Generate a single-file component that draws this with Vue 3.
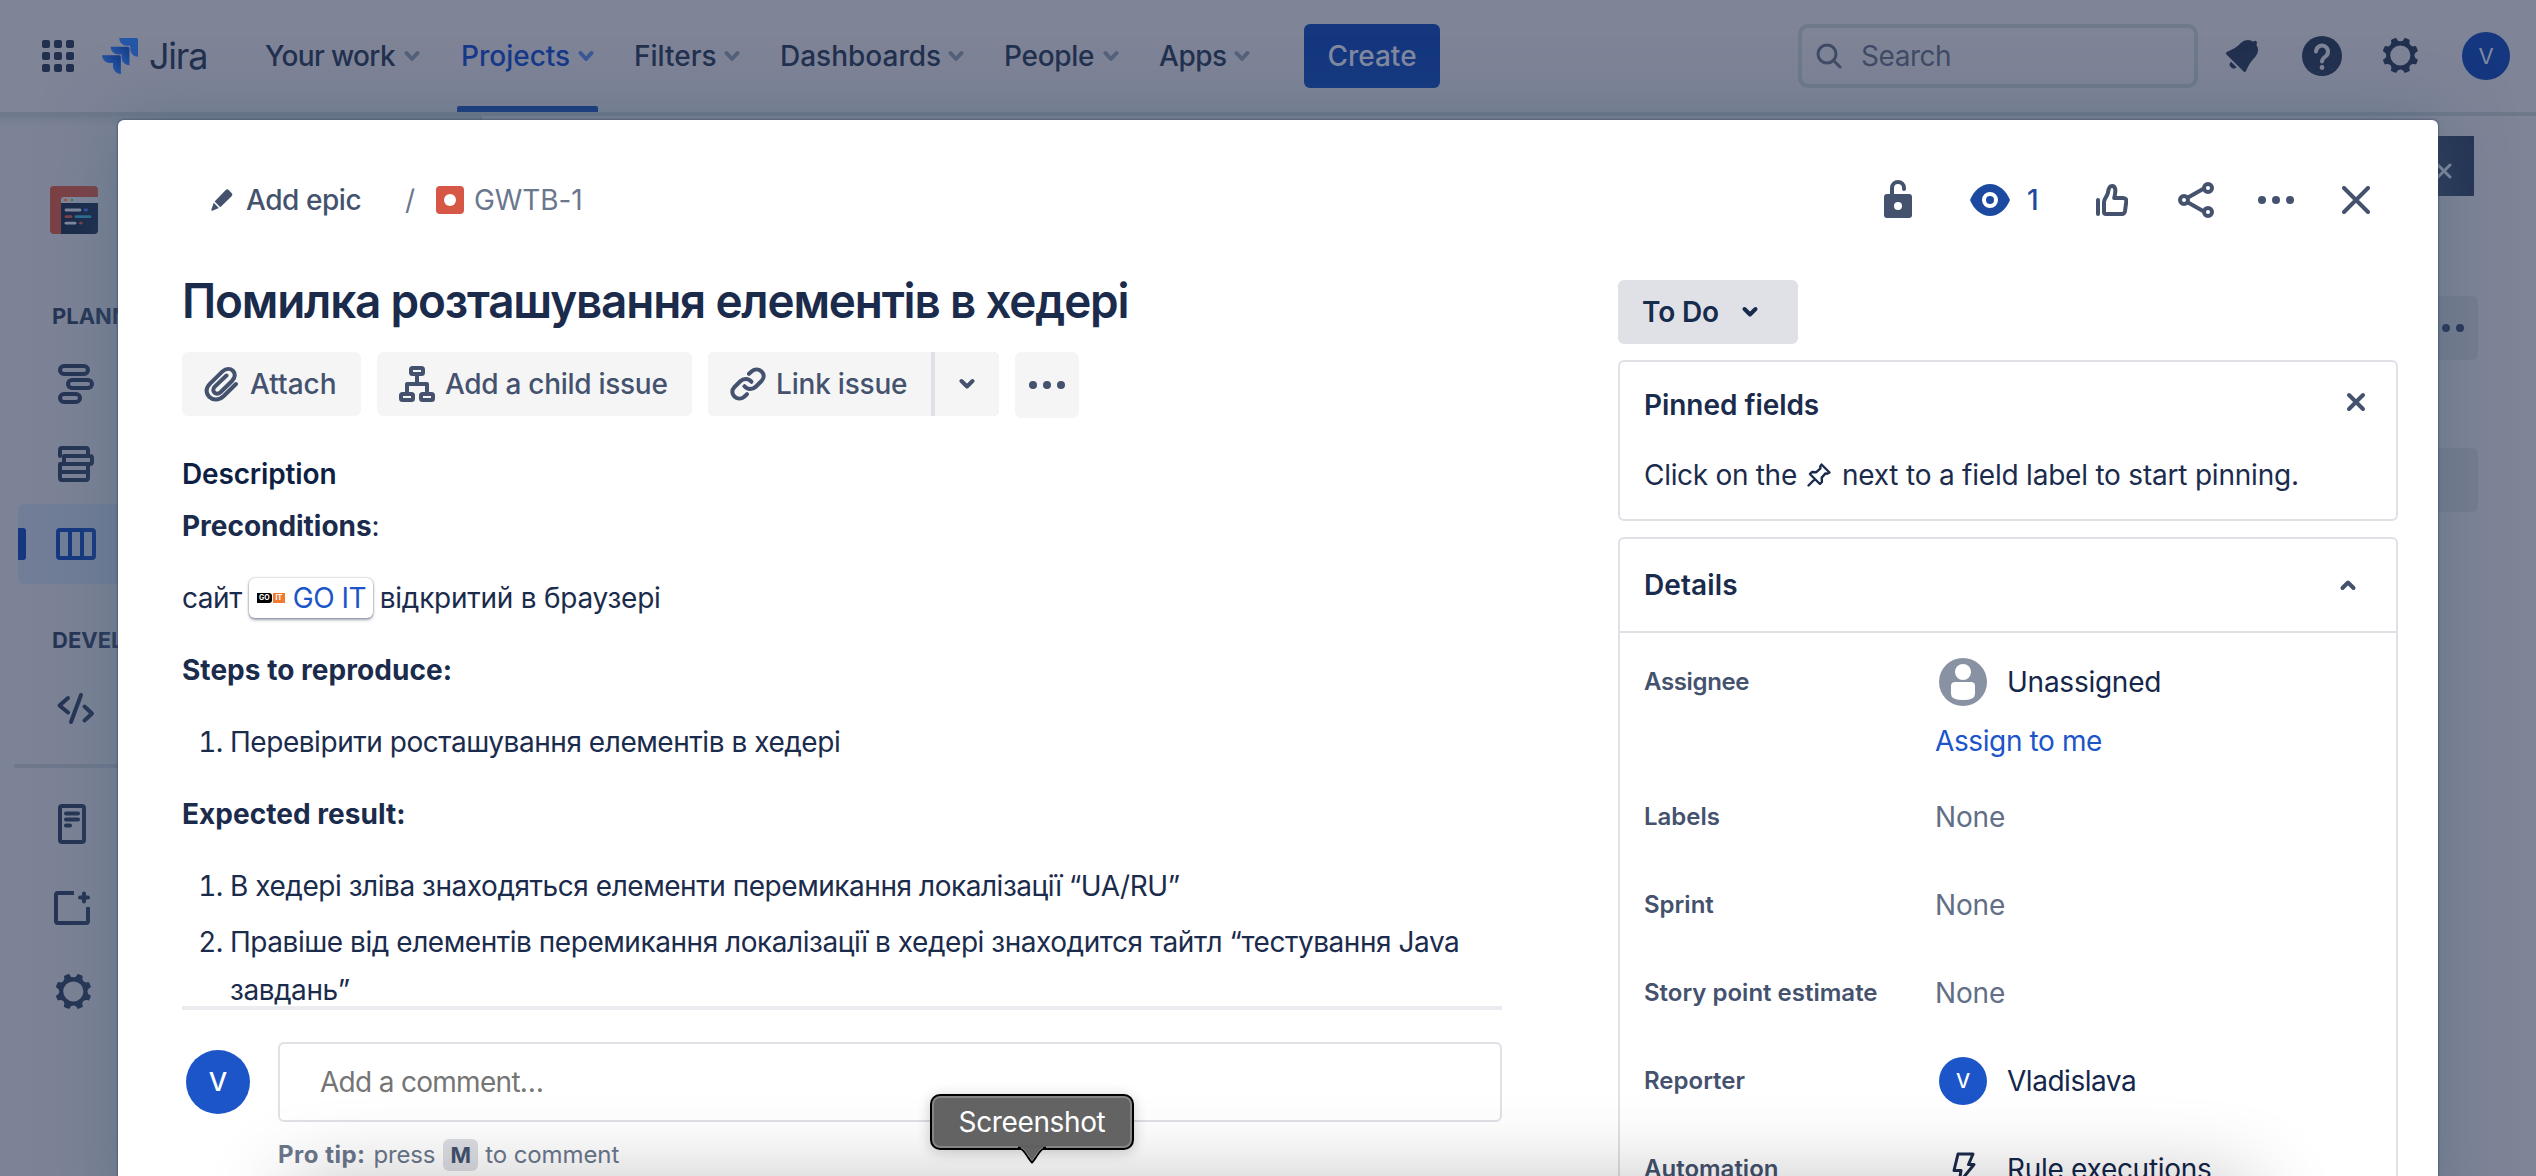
<script setup>
const navItems = [
  { label: 'Your work', cls: 'w-work' },
  { label: 'Projects', cls: 'w-projects', active: true },
  { label: 'Filters', cls: 'w-filters' },
  { label: 'Dashboards', cls: 'w-dash' },
  { label: 'People', cls: 'w-people' },
  { label: 'Apps', cls: 'w-apps' },
]
const emptyFields = ['Labels', 'Sprint', 'Story point estimate']
const gear =
  'M11.701 16.7a5.002 5.002 0 110-10.003 5.002 5.002 0 010 10.004m8.368-3.117a1.995 1.995 0 01-1.346-1.885c0-.876.563-1.613 1.345-1.885a.48.48 0 00.315-.574 8.947 8.947 0 00-.836-1.993.477.477 0 00-.598-.195 2.04 2.04 0 01-1.29.08 1.988 1.988 0 01-1.404-1.395 2.04 2.04 0 01.076-1.297.478.478 0 00-.196-.597 8.98 8.98 0 00-1.975-.826.479.479 0 00-.574.314 1.995 1.995 0 01-1.885 1.346 1.994 1.994 0 01-1.884-1.345.482.482 0 00-.575-.315c-.708.2-1.379.485-2.004.842a.477.477 0 00-.198.582A2.002 2.002 0 014.445 7.06a.478.478 0 00-.595.196 8.946 8.946 0 00-.833 1.994.48.48 0 00.308.572 1.995 1.995 0 011.323 1.877c0 .867-.552 1.599-1.324 1.877a.479.479 0 00-.308.57 8.99 8.99 0 00.723 1.79.477.477 0 00.624.194c.595-.273 1.343-.264 2.104.238.117.077.225.185.302.3.527.8.512 1.58.198 2.188a.473.473 0 00.168.628 8.946 8.946 0 002.11.897.474.474 0 00.57-.313 1.995 1.995 0 011.886-1.353c.878 0 1.618.567 1.887 1.353a.475.475 0 00.57.313 8.964 8.964 0 002.084-.883.473.473 0 00.167-.631c-.318-.608-.337-1.393.191-2.195.077-.116.185-.225.302-.302.772-.511 1.527-.513 2.125-.23a.477.477 0 00.628-.19 8.925 8.925 0 00.728-1.793.478.478 0 00-.314-.573'
</script>

<template>
  <div class="screen">
    <header class="nav">
      <svg class="apps" width="32" height="32" viewBox="0 0 32 32">
        <template v-for="r in 3" :key="r">
          <rect v-for="c in 3" :key="c" :x="(c - 1) * 12" :y="(r - 1) * 12" width="8" height="8" rx="2" />
        </template>
      </svg>
      <svg class="mark" width="36" height="36" viewBox="0 0 24 24">
        <defs>
          <linearGradient id="jg" x1="1" y1="0" x2="0.35" y2="0.6">
            <stop offset="0.2" stop-color="#173f8c" />
            <stop offset="1" stop-color="#2656a6" />
          </linearGradient>
        </defs>
        <path fill="#2656a6" d="M23.013 0H11.455a5.215 5.215 0 0 0 5.215 5.215h2.129v2.057A5.215 5.215 0 0 0 24 12.483V1.005A1.001 1.001 0 0 0 23.013 0Z" />
        <path fill="url(#jg)" d="M17.294 5.757H5.736a5.215 5.215 0 0 0 5.215 5.214h2.129v2.058a5.218 5.218 0 0 0 5.215 5.214V6.758a1.001 1.001 0 0 0-1.001-1.001z" />
        <path fill="url(#jg)" d="M11.571 11.513H0a5.218 5.218 0 0 0 5.232 5.215h2.13v2.057A5.215 5.215 0 0 0 12.575 24V12.518a1.005 1.005 0 0 0-1.005-1.005z" />
      </svg>
      <span class="brand">Jira</span>
      <nav class="menu">
        <a v-for="n in navItems" :key="n.label" class="item" :class="[n.cls, { active: n.active }]">
          <span>{{ n.label }}</span>
          <svg width="16" height="12" viewBox="0 0 16 12"><path d="M2.5 3L8 9l5.500-6" /></svg>
        </a>
      </nav>
      <button class="create">Create</button>
      <div class="search">
        <svg width="26" height="26" viewBox="0 0 26 26"><circle cx="11" cy="11" r="9" /><path d="M17.500 17.500L24 24" /></svg>
        <span>Search</span>
      </div>
      <svg class="bell" width="48" height="48" viewBox="0 0 24 24">
        <path d="M6.485 17.669a2 2 0 002.829 0l-2.829-2.83a2 2 0 000 2.83zm4.897-12.191l-.725.725c-.782.782-2.21 1.813-3.206 2.311l-3.017 1.509c-.495.248-.584.774-.187 1.171l8.556 8.556c.398.396.922.313 1.171-.188l1.51-3.016c.494-.988 1.526-2.42 2.311-3.206l.725-.726a5.048 5.048 0 00.64-6.356 1.01 1.01 0 10-1.354-1.494c-.023.025-.046.049-.066.075a5.043 5.043 0 00-2.788-.84 5.036 5.036 0 00-3.570 1.478z" />
      </svg>
      <svg class="help" width="40" height="40" viewBox="0 0 40 40">
        <circle cx="20" cy="20" r="20" fill="#22304f" />
        <path d="M14 15.500a6 6 0 1 1 9.500 5c-2.300 1.600-3.500 2.500-3.500 5" fill="none" stroke="#7f8497" stroke-width="4" stroke-linecap="round" />
        <circle cx="20" cy="31.500" r="2.400" fill="#7f8497" />
      </svg>
      <svg class="cog" width="48" height="48" viewBox="0 0 24 24"><path fill-rule="evenodd" :d="gear" /></svg>
      <span class="me">V</span>
    </header>

    <aside class="side">
      <svg class="project" width="48" height="48" viewBox="0 0 48 48">
        <defs><clipPath id="pc"><rect width="48" height="48" rx="4" /></clipPath></defs>
        <g clip-path="url(#pc)">
          <rect width="48" height="48" fill="#7c4145" />
          <path d="M11 17v-3a3 3 0 0 1 3-3h34v6z" fill="#7f8799" />
          <rect x="11" y="17" width="37" height="31" fill="#1a2a4a" />
          <circle cx="15.500" cy="14" r="1.200" fill="#a33c3a" /><circle cx="19" cy="14" r="1.200" fill="#a8842f" /><circle cx="22" cy="14" r="1.200" fill="#2d75a0" />
          <g stroke-width="2.800" stroke-linecap="round">
            <path d="M16 24h14" stroke="#8188a0" /><path d="M35 24h1.500" stroke="#2c539c" />
            <path d="M16 30.700h5" stroke="#7c4145" /><path d="M26 30.700h14" stroke="#2a6e8f" />
            <path d="M16 37.200h9" stroke="#8188a0" /><path d="M30.500 37.200h.6" stroke="#7c4145" />
          </g>
        </g>
      </svg>
      <div class="group g1">PLANNING</div>
      <div class="row r1">
        <svg width="40" height="40" viewBox="0 0 40 40"><rect x="4" y="2" width="28" height="8" rx="4" /><rect x="12" y="16" width="24" height="8" rx="4" /><rect x="4" y="30" width="20" height="8" rx="4" /></svg>
      </div>
      <div class="row r2">
        <svg width="40" height="40" viewBox="0 0 40 40"><path d="M4 12V6q0-2 2-2h24q2 0 2 2v6M8 12h26q2 0 2 2v4q0 2-2 2H4v14q0 2 2 2h24q2 0 2-2V20M6 28h26M8 12v8" /></svg>
      </div>
      <div class="row r3 selected">
        <i class="bar"></i>
        <svg width="40" height="40" viewBox="0 0 40 40"><rect x="2" y="6" width="36" height="28" rx="2" /><path d="M14 6v28M26 6v28" /></svg>
      </div>
      <div class="group g2">DEVELOPMENT</div>
      <div class="row r4">
        <svg width="40" height="40" viewBox="0 0 40 40"><path d="M12 9l-8.500 7.500 8.500 7M25 6L15 33M28.500 17.500l7.500 7-7.500 7" /></svg>
      </div>
      <div class="rule"></div>
      <div class="row r5">
        <svg width="40" height="40" viewBox="0 0 40 40"><rect x="4" y="2" width="24" height="36" rx="2" /><path d="M10 9.500h12M10 15.500h12M10 21.500h4" /></svg>
      </div>
      <div class="row r6">
        <svg width="40" height="40" viewBox="0 0 40 40"><path d="M20 5H4q-2 0-2 2v26q0 2 2 2h28q2 0 2-2V19" stroke-linecap="butt" /><path d="M30 5.500v8M26 9.500h8" /></svg>
      </div>
      <div class="row r7">
        <svg class="solid" width="48" height="48" viewBox="0 0 24 24"><path fill-rule="evenodd" :d="gear" /></svg>
      </div>
    </aside>

    <div class="flag">
      <svg width="16" height="16" viewBox="0 0 16 16"><path d="M2 2l12 12M14 2L2 14" /></svg>
    </div>
    <div class="ghost more"><i></i><i></i></div>
    <div class="ghost second"></div>

    <section class="modal">
      <div class="top">
        <svg class="pencil" width="24" height="24" viewBox="0 0 24 24">
          <path d="M15.500 2.200q1.700-1.700 3.400 0l2.700 2.700q1.700 1.700 0 3.400L10.300 19.200 4.600 13.400zM3.700 14.800l5.200 5.200-6.600 2.800q-1.300.3-1-1z" />
        </svg>
        <span class="epic">Add epic</span>
        <span class="slash">/</span>
        <svg class="bug" width="28" height="28" viewBox="0 0 28 28"><rect width="28" height="28" rx="4" fill="#d65745" /><circle cx="14" cy="14" r="6" fill="#fff" /></svg>
        <span class="key">GWTB-1</span>
        <div class="tools">
          <svg class="lock" width="28" height="40" viewBox="0 0 28 40">
            <path fill-rule="evenodd" d="M3 15h22q3 0 3 3v18q0 3-3 3H3q-3 0-3-3V18q0-3 3-3zM14 23a4 4 0 1 0 0 8 4 4 0 0 0 0-8z" fill="#44526e" />
            <path d="M8 16V9a6 6 0 0 1 12 0v1" class="s" />
          </svg>
          <svg class="eye" width="40" height="32" viewBox="0 0 40 32">
            <path fill="#1c4aa0" d="M0 16C4 6 12 0 20 0s16 6 20 16c-4 10-12 16-20 16S4 26 0 16z" />
            <circle cx="20" cy="16" r="6" fill="#1c4aa0" stroke="#fff" stroke-width="4" />
          </svg>
          <span class="watch">1</span>
          <svg class="like" width="32" height="32" viewBox="0 0 32 32">
            <path class="s" d="M2 16v14M8 28V18c0-4 3.500-5.500 4-9.500C12.500 4.500 13.500 2 16 2c4 0 4 5 2.200 12H27q3.500 0 3.300 3.500L29 27q-.5 3-3 3H10q-2 0-2-2z" />
          </svg>
          <svg class="share" width="36" height="36" viewBox="0 0 36 36">
            <path class="s" d="M10 15.500l15-8.500M10 20.500l15 8.500" /><circle class="s" cx="6" cy="18" r="4" /><circle class="s" cx="30" cy="6" r="4" /><circle class="s" cx="30" cy="30" r="4" />
          </svg>
          <svg class="dots" width="36" height="8" viewBox="0 0 36 8"><circle cx="4" cy="4" r="4" /><circle cx="18" cy="4" r="4" /><circle cx="32" cy="4" r="4" /></svg>
          <svg class="close" width="28" height="28" viewBox="0 0 28 28"><path class="s" d="M2 2l24 24M26 2L2 26" /></svg>
        </div>
      </div>

      <div class="columns">
        <main class="left">
          <h1>Помилка розташування елементів в хедері</h1>
          <div class="actions">
            <button class="btn attach">
              <svg width="34" height="36" viewBox="0 0 34 36"><path class="s" d="M32 18L19.500 30.200C9.500 39.500-3.500 27 5.800 17.800L18.500 5.400C26-1.500 35.500 7.500 28 15L16.500 26.200c-4.500 4-10-1.200-5.700-5.500L22.500 9.500" /></svg>
              <span>Attach</span>
            </button>
            <button class="btn child">
              <svg width="36" height="36" viewBox="0 0 36 36">
                <path class="s" d="M18 10v8M8 26v-8h20v8" /><rect class="s" x="12" y="2" width="12" height="6" rx="1.500" /><rect class="s" x="2" y="28" width="12" height="6" rx="1.500" /><rect class="s" x="22" y="28" width="12" height="6" rx="1.500" />
              </svg>
              <span>Add a child issue</span>
            </button>
            <div class="split">
              <button class="btn link">
                <svg width="36" height="34" viewBox="0 0 36 34">
                  <path class="s" d="M19 6.800l2.800-2.600C28.500-1.500 38 7.500 31.500 14L26 19.500c-3.500 3.500-8.500 3.300-11.500-.3" />
                  <path class="s" transform="rotate(180 18 17)" d="M19 6.800l2.800-2.600C28.500-1.500 38 7.500 31.500 14L26 19.500c-3.500 3.500-8.500 3.300-11.500-.3" />
                </svg>
                <span>Link issue</span>
              </button>
              <button class="btn caret"><svg width="16" height="12" viewBox="0 0 16 12"><path class="s" d="M2.500 3L8 8.500 13.500 3" /></svg></button>
            </div>
            <button class="btn more-btn"><svg width="36" height="8" viewBox="0 0 36 8"><circle cx="4" cy="4" r="4" /><circle cx="18" cy="4" r="4" /><circle cx="32" cy="4" r="4" /></svg></button>
          </div>

          <h2>Description</h2>
          <div class="doc">
            <p><b class="tight">Preconditions</b>:</p>
            <p class="site">
              <span>сайт</span>
              <span class="chip"><span class="logo"><em>GO</em><em>IT</em></span><a>GO IT</a></span>
              <span class="after">відкритий в браузері</span>
            </p>
            <p><b>Steps to reproduce:</b></p>
            <ol><li>Перевірити росташування елементів в хедері</li></ol>
            <p><b>Expected result:</b></p>
            <ol>
              <li>В хедері зліва знаходяться елементи перемикання локалізації “UA/RU”</li>
              <li>Правіше від елементів перемикання локалізації в хедері знаходится тайтл “тестування Java<br />завдань”</li>
            </ol>
          </div>

          <div class="comment">
            <span class="avatar">V</span>
            <div class="entry">
              <div class="field">Add a comment…</div>
              <div class="tip"><b>Pro tip:</b><span class="press">press</span><kbd>M</kbd><span>to comment</span></div>
            </div>
          </div>
        </main>

        <div class="right">
          <button class="status"><span>To Do</span><svg width="18" height="12" viewBox="0 0 18 12"><path d="M3.500 3L9 8.500 14.500 3" /></svg></button>
          <div class="card pinned">
            <div class="head">
              <h3>Pinned fields</h3>
              <svg width="20" height="20" viewBox="0 0 20 20"><path class="s" d="M3 3l14 14M17 3L3 17" /></svg>
            </div>
            <p>
              <span class="c1">Click on the</span>
              <svg width="26" height="26" viewBox="0 0 26 26"><path d="M15.500 2.500l8 8-2.300 1.200-1.700-.3-3.800 4.200.2 4.400-2 2L3.900 12l2-2 4.400.2 4.200-3.800-.3-1.700zM8.500 17.500L2.500 23.500" /></svg>
              <span>next to a field label to start pinning.</span>
            </p>
          </div>
          <div class="card details">
            <div class="head">
              <h3>Details</h3>
              <svg width="18" height="12" viewBox="0 0 18 12"><path class="s" d="M3.500 9L9 3.500 14.500 9" /></svg>
            </div>
            <div class="fields">
              <div class="f assignee">
                <label>Assignee</label>
                <div>
                  <div class="person">
                    <svg width="48" height="48" viewBox="0 0 48 48"><circle cx="24" cy="24" r="24" fill="#8992a3" /><circle cx="24" cy="14" r="8" fill="#fff" /><path d="M12 28q0-4 4-4h16q4 0 4 4v8q0 6-12 6t-12-6z" fill="#fff" /></svg>
                    <span>Unassigned</span>
                  </div>
                  <a class="assign">Assign to me</a>
                </div>
              </div>
              <div v-for="f in emptyFields" :key="f" class="f"><label>{{ f }}</label><span class="none">None</span></div>
              <div class="f"><label>Reporter</label><div class="person"><span class="rep">V</span><span class="name">Vladislava</span></div></div>
              <div class="f">
                <label>Automation</label>
                <div class="person">
                  <svg class="bolt" width="48" height="48" viewBox="0 0 48 48"><path d="M19 9h15l-4.500 10.500H35L20 38l2-12.500h-7z" /></svg>
                  <span class="rule-x">Rule executions</span>
                </div>
              </div>
            </div>
          </div>
        </div>
      </div>
    </section>

    <div class="dock"></div>
    <div class="tooltip">
      <span>Screenshot</span>
      <svg width="40" height="20" viewBox="0 0 40 20">
        <path d="M4 0C12 2 15 14 20 17 25 14 28 2 36 0z" fill="#5f5f5f" />
        <path d="M6 2.500C13 3 15.500 14 20 17.500 24.500 14 27 3 34 2.500" fill="none" stroke="#000" stroke-width="2" />
        <path d="M9 2.500C14 5 16.500 12 20 15.500 23.500 12 26 5 31 2.500" fill="#636363" stroke="#858585" stroke-width="1" />
      </svg>
    </div>
  </div>
</template>

<style>
body { margin: 0; }
</style>

<style scoped>
* { box-sizing: border-box; margin: 0; padding: 0; }
.screen {
  position: relative; width: 2536px; height: 1176px; overflow: hidden;
  background: #7f8497; font: 400 28px/48px Inter, "Noto Sans", sans-serif; color: #1b2b4c;
  -webkit-font-smoothing: antialiased;
}
button { border: 0; font: inherit; color: inherit; }
svg { display: block; flex: none; }
span, label, a { white-space: nowrap; }

.nav { display: flex; align-items: center; width: 2536px; height: 116px; padding: 0 26px 0 42px; border-bottom: 4px solid #6e788b; color: #22304f; fill: #22304f; }
.nav > * { flex: none; }
.mark { margin-left: 28px; }
.brand { width: 116px; margin-left: 11px; font-size: 36px; letter-spacing: -1.2px; }
.menu { display: flex; gap: 41px; height: 112px; }
.item { position: relative; display: flex; justify-content: space-between; align-items: center; font-weight: 500; }
.item svg { fill: none; stroke: #56617a; stroke-width: 4; stroke-linecap: round; stroke-linejoin: round; }
.w-work { width: 155px; letter-spacing: -.63px; }
.w-projects { width: 133px; }
.w-filters { width: 106px; margin-left: -1px; }
.w-dash { width: 184px; margin-left: -1px; }
.w-people { width: 115px; letter-spacing: -.3px; margin-left: -1px; }
.w-apps { width: 91px; letter-spacing: -.45px; margin-left: -1px; }
.active { color: #15388a; }
.active svg { stroke: #3b5795; }
.active::after { content: ''; position: absolute; left: -4px; width: 141px; bottom: 0; height: 6px; background: #14377f; border-radius: 2px 2px 0 0; }
.create { width: 136px; height: 64px; margin-left: 54px; border-radius: 6px; background: #14377f; color: #8289a0; font-weight: 500; }
.search { display: flex; align-items: center; width: 400px; height: 64px; margin-left: 358px; padding-left: 14px; border: 4px solid #6e798b; border-radius: 10px; color: #3f4b66; letter-spacing: -.45px; }
.search svg { margin-right: 19px; fill: none; stroke: #3f4b66; stroke-width: 3; stroke-linecap: round; }
.bell { margin-left: 20px; }
.help { margin-left: 36px; }
.cog { margin-left: 35px; }
.me { width: 48px; height: 48px; margin-left: auto; border-radius: 50%; background: #14377f; color: #8289a0; font-size: 22px; text-align: center; }

.side { position: absolute; left: 0; top: 116px; width: 482px; height: 1060px; padding: 70px 0 0; border-right: 2px solid #6e788b; color: #253454; background: linear-gradient(#727b8e 0, #7d8396 10px); }
.side svg { fill: none; stroke: #253454; stroke-width: 4; stroke-linecap: round; stroke-linejoin: round; }
.side .project { margin-left: 50px; stroke: none; }
.side .solid { fill: #253454; stroke: none; margin-left: -6px; }
.group { margin-left: 52px; font-size: 22px; font-weight: 700; line-height: 24px; }
.g1 { margin-top: 70px; }
.row { position: relative; display: flex; align-items: center; height: 80px; margin-left: 18px; padding-left: 38px; }
.r1 { margin-top: 16px; }
.r3 { border-radius: 6px; }
.selected { background: #727e98; }
.selected svg { stroke: #14377f; }
.bar { position: absolute; left: 0; top: 24px; width: 8px; height: 32px; background: #14377f; border-radius: 0 3px 3px 0; }
.g2 { margin-top: 44px; }
.r4 { margin-top: 17px; }
.rule { height: 4px; margin: 15px 0 0 14px; background: #6f788d; }
.r5 { margin-top: 16px; }
.r6 { padding-left: 36px; margin-top: 4px; }
.r7 { padding-left: 38px; margin-top: 4px; }

.flag { position: absolute; left: 2400px; top: 136px; width: 74px; height: 60px; background: #243352; }
.flag svg { margin: 27px 0 0 36px; stroke: #8289a0; stroke-width: 3; stroke-linecap: round; }
.ghost { position: absolute; left: 2400px; width: 78px; height: 64px; border-radius: 6px; background: #767d90; }
.more { top: 296px; display: flex; gap: 6px; align-items: center; padding-left: 42px; }
.more i { width: 8px; height: 8px; border-radius: 50%; background: #253454; }
.second { top: 448px; }

.modal { position: absolute; left: 118px; top: 120px; width: 2320px; height: 1100px; padding: 48px 40px 0 64px; border-radius: 6px; background: #fff; box-shadow: 0 0 2px 1px rgba(50, 65, 95, .45), 0 0 70px rgba(70, 100, 122, .5); }
.s { fill: none; stroke: #44526e; stroke-width: 4; stroke-linecap: round; stroke-linejoin: round; }
.top { display: flex; align-items: center; height: 64px; }
.pencil { margin-left: 28px; fill: #44526e; }
.epic { width: 115px; margin-left: 12px; font-weight: 500; color: #44526e; letter-spacing: -.45px; }
.slash { width: 20px; margin-left: 44px; color: #6b778c; font-size: 28px; }
.bug { margin-left: 11px; }
.key { margin-left: 10px; color: #6b778c; letter-spacing: -.1px; }
.tools { display: flex; align-items: center; margin: 0 28px 0 auto; }
.lock { margin-top: -2px; }
.eye { margin-left: 58px; }
.watch { width: 14px; margin-left: 17px; font-weight: 500; color: #1c4aa0; }
.like { margin-left: 55px; }
.share { margin-left: 50px; }
.dots { margin-left: 44px; fill: #44526e; }
.close { margin-left: 48px; }
.columns { display: flex; justify-content: space-between; margin-top: 40px; }
.left { width: 1320px; }
h1 { height: 56px; font-size: 48px; line-height: 58px; font-weight: 600; letter-spacing: -1.22px; white-space: nowrap; transform: scaleX(.955); transform-origin: 0 50%; }
.actions { display: flex; gap: 16px; height: 66px; margin-top: 24px; align-items: flex-start; color: #44526e; font-weight: 500; }
.btn { display: flex; align-items: center; height: 64px; border-radius: 6px; background: #f5f5f6; }
.attach { width: 179px; padding-left: 22px; }
.attach span { margin-left: 12px; }
.child { width: 315px; padding-left: 22px; letter-spacing: -.29px; }
.child span { margin-left: 10px; }
.split { display: flex; gap: 4px; background: #dfe0e5; border-radius: 6px; }
.link { width: 223px; padding-left: 22px; border-radius: 6px 0 0 6px; letter-spacing: -.2px; }
.link span { margin-left: 10px; }
.caret { width: 64px; justify-content: center; border-radius: 0 6px 6px 0; }
.more-btn { width: 64px; height: 66px; justify-content: center; fill: #44526e; }
h2 { height: 48px; margin-top: 32px; font-size: 28px; font-weight: 600; color: #0d1f42; letter-spacing: -.15px; }
.doc { height: 504px; margin-top: 4px; overflow: hidden; letter-spacing: -.46px; }
.doc p { height: 48px; margin-bottom: 24px; }
b { font-weight: 700; letter-spacing: .04px; }
.tight { letter-spacing: -.03px; }
.site { display: flex; align-items: center; }
.chip { display: flex; align-items: center; height: 40px; width: 124px; margin-left: 7px; padding-left: 8px; border-radius: 6px; background: #fff; box-shadow: 0 2px 3px rgba(9, 30, 66, .4), 0 0 2px rgba(9, 30, 66, .4); }
.chip a { color: #1c55c8; margin-left: 8px; }
.logo { display: flex; gap: 1px; width: 28px; height: 10px; }
.logo em { width: 15px; height: 10px; background: #000; color: #fff; font: 700 7px/10px Inter, sans-serif; letter-spacing: 0; text-align: center; border-radius: 0 3px 3px 0; }
.logo em + em { width: 12px; background: #f07a32; border-radius: 0; }
.after { margin-left: 7px; letter-spacing: -.25px; }
ol { margin: 0 0 24px; padding-left: 48px; list-style-position: outside; }
li + li { margin-top: 8px; }
.comment { display: flex; border-top: 4px solid #ebecf0; padding-top: 32px; }
.avatar { width: 64px; height: 64px; margin: 8px 28px 0 4px; border-radius: 50%; background: #1c55c8; color: #fff; font-size: 26px; font-weight: 500; line-height: 64px; text-align: center; }
.entry { flex: 1; }
.field { height: 80px; padding-left: 40px; border: 2px solid #dfe1e6; border-radius: 6px; color: #757575; line-height: 76px; letter-spacing: -.7px; }
.tip { display: flex; align-items: center; margin-top: 9px; font-size: 24px; color: #6b778c; letter-spacing: -.1px; }
.tip b { letter-spacing: .5px; }
.press { margin-left: 8px; letter-spacing: -.2px; }
kbd { width: 35px; height: 32px; margin: 0 7px 0 8px; border-radius: 6px; background: #dcdee3; color: #44526e; font: 700 22px/32px Inter, sans-serif; text-align: center; }

.right { width: 780px; padding-top: 8px; }
.status { display: flex; align-items: center; width: 180px; height: 64px; padding-left: 24px; border-radius: 6px; background: #dfe1e6; color: #172b4d; font-weight: 600; letter-spacing: -.16px; }
.status svg { margin-left: 22px; fill: none; stroke: #172b4d; stroke-width: 4; stroke-linecap: round; stroke-linejoin: round; }
.card { border: 2px solid #dfe1e6; border-radius: 6px; }
.pinned { height: 161px; margin-top: 16px; padding: 19px 30px 0 24px; }
.head { display: flex; justify-content: space-between; align-items: center; }
h3 { font-size: 28px; font-weight: 600; line-height: 48px; letter-spacing: -.05px; }
.pinned .head svg { margin-top: -6px; }
.pinned p { display: flex; align-items: center; margin-top: 22px; letter-spacing: -.21px; }
.pinned .c1 { letter-spacing: -.3px; }
.pinned p svg { margin: 0 10px 0 9px; fill: none; stroke: #1b2b4c; stroke-width: 2.400; stroke-linejoin: round; stroke-linecap: round; }
.details { height: 720px; margin-top: 16px; }
.details .head { height: 94px; padding: 0 39px 0 24px; border-bottom: 2px solid #dfe1e6; }
.details h3 { letter-spacing: .1px; }
.fields { padding: 25px 0 0 24px; }
.f { display: flex; height: 88px; }
.assignee { height: 135px; }
label { width: 293px; font-size: 24px; font-weight: 600; line-height: 48px; color: #44526e; }
.assignee label { letter-spacing: -.35px; }
.person { display: flex; align-items: center; gap: 20px; height: 48px; padding-left: 2px; color: #14264a; letter-spacing: -.25px; }
.assign { display: block; margin-top: 12px; color: #1c55c8; line-height: 46px; letter-spacing: -.39px; margin-left: -2px; }
.none { color: #626f86; letter-spacing: -.14px; margin-left: -2px; }
.rep { width: 48px; height: 48px; border-radius: 50%; background: #1c55c8; color: #fff; font-size: 20px; font-weight: 500; text-align: center; letter-spacing: 0; }
.name { letter-spacing: -.47px; }
.rule-x { letter-spacing: -.29px; }
.bolt path { fill: none; stroke: #1b2b4c; stroke-width: 3; stroke-linejoin: round; }

.dock { position: absolute; left: 290px; top: 1186px; width: 1960px; height: 60px; box-shadow: 0 0 84px rgba(0, 0, 0, .3); }
.tooltip { position: absolute; left: 930px; top: 1094px; width: 204px; height: 56px; border: 2px solid #000; border-radius: 10px; background: #636363; box-shadow: inset 0 0 0 2px #858585, 0 2px 14px rgba(0, 0, 0, .2); color: #fff; line-height: 52px; text-align: center; letter-spacing: -.37px; }
.tooltip svg { position: absolute; left: 80px; top: 49px; }
</style>
